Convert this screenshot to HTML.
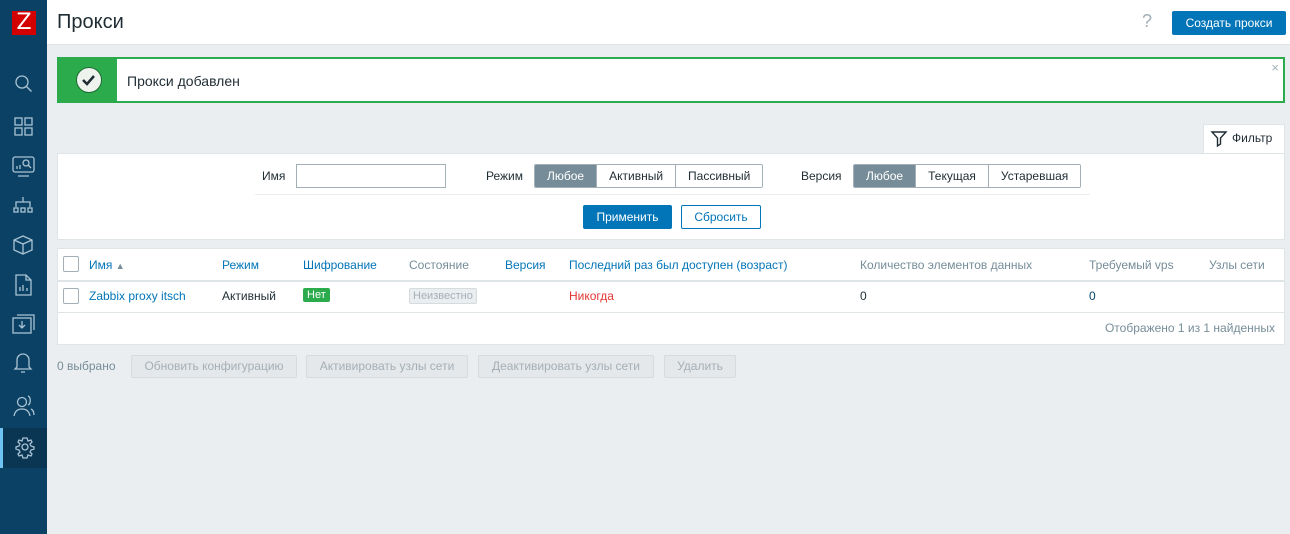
<!DOCTYPE html><html><head><meta charset="utf-8"><style>
*{box-sizing:border-box;margin:0;padding:0}
body{width:1290px;height:534px;background:#ebeef0;font-family:"Liberation Sans",Arial,sans-serif;font-size:12px;color:#1f2c33;position:relative;overflow:hidden}
.a{position:absolute}
#sb{left:0;top:0;width:47px;height:534px;background:#0b4164}
#hd{left:47px;top:0;width:1243px;height:45px;background:#fff;border-bottom:1px solid #dfe4e7}
.btn{position:absolute;height:24px;line-height:22px;text-align:center;border-radius:2px}
.blue{background:#0275b8;color:#fff;border:1px solid #0275b8}
.wb{background:#fff;color:#0275b8;border:1px solid #0275b8}
.seg{position:absolute;height:24px;display:flex;border:1px solid #a2afb7;border-radius:2px;overflow:hidden}
.seg div{padding:0 12px;line-height:22px;border-left:1px solid #a2afb7;background:#fff}
.seg div:first-child{border-left:0;background:#768d99;color:#fff}
.lnk{color:#0275b8}
.dis{position:absolute;height:23px;line-height:21px;border:1px solid #d6dbde;background:#e5e8ea;color:#a5afb6;border-radius:2px;text-align:center}
.cb{position:absolute;width:16px;height:16px;border:1px solid #a2afb7;border-radius:2px;background:#fff}
svg{position:absolute}
</style></head><body>
<div id="sb" class="a">
<div class="a" style="left:12px;top:11px;width:24px;height:24px;background:#d40000;color:#fff;font-size:22px;line-height:24px;text-align:center;font-family:'DejaVu Sans',sans-serif">Z</div>
<div class="a" style="left:0;top:428px;width:47px;height:40px;background:#0a3553;border-left:3px solid #6fc3f2"></div>
<svg width="47" height="440" style="left:0;top:60px" fill="none" stroke="#a9c3d3" stroke-width="1.3">
<circle cx="22" cy="22" r="6"/><path d="M26.5 26.5l5 5"/>
<rect x="15" y="58" width="7" height="7"/><rect x="25" y="58" width="7" height="7"/><rect x="15" y="68" width="7" height="7"/><rect x="25" y="68" width="7" height="7"/>
<rect x="13" y="97" width="21" height="15" rx="2"/><path d="M18 116h11M17 109v-3M20 109v-4"/><circle cx="26" cy="103" r="3"/><path d="M28 105l3 3"/>
<path d="M23 137v5M16 147v-5h14v5"/><rect x="14" y="148" width="4" height="4"/><rect x="21" y="148" width="4" height="4"/><rect x="28" y="148" width="4" height="4"/>
<path d="M23 176l9 4v10l-9 4-9-4v-10zM14 180l9 4 9-4M23 184v10"/>
<path d="M16 215h10l5 5v15H16zM26 215v5h5M20 231v-4M23 231v-6M27 231v-3"/>
<rect x="13" y="258" width="18" height="15"/><path d="M17 255h17v15M22 261v7M19 265l3 3 3-3"/>
<path d="M17 307v-7a6 6 0 0112 0v7l2 2H15zM21 312h4"/>
<circle cx="22" cy="342" r="4.5"/><path d="M14 356c1-5 4-7 8-7s7 2 8 7M28 336c3 1 3 8 0 9M31 349c2 1 3 3 3 6"/>
<circle cx="25" cy="387" r="3"/><path d="M25 378l2 0 1 3 3-1 1 2-2 2 1 2 3 1v2l-3 1-1 2 2 2-1 2-3-1-1 3h-4l-1-3-3 1-1-2 2-2-1-2-3-1v-2l3-1 1-2-2-2 1-2 3 1 1-3z"/>
</svg></div>
<div id="hd" class="a"><div class="a" style="left:10px;top:11px;font-size:20px">Прокси</div>
<div class="a" style="left:1095px;top:11px;font-size:18px;color:#a2afb7">?</div>
<div class="btn blue" style="left:1125px;top:11px;width:114px">Создать прокси</div></div>
<div class="a" style="left:57px;top:57px;width:1228px;height:46px;border:2px solid #2bab4c;background:#fff">
<div class="a" style="left:0;top:0;width:58px;height:42px;background:#2bab4c"></div>
<div class="a" style="left:17px;top:8px;width:26px;height:26px;border-radius:50%;background:#eef3ee;border:1px solid #1d6d33"></div>
<svg width="60" height="42" style="left:0;top:0"><path d="M24 21l4 4 7-8" stroke="#1f2c33" stroke-width="2.5" fill="none"/></svg>
<div class="a" style="left:68px;top:14px;font-size:14px">Прокси добавлен</div>
<div class="a" style="right:4px;top:1px;color:#a2afb7;font-size:13px">×</div></div>
<div class="a" style="left:1203px;top:124px;width:82px;height:30px;background:#fff;border:1px solid #dfe4e7;border-bottom:0">
<svg width="20" height="20" style="left:6px;top:4px"><path d="M2 3h14l-5.5 6v6l-3 2v-8z" fill="none" stroke="#1f2c33" stroke-width="1.4"/></svg>
<div class="a" style="left:28px;top:6px">Фильтр</div></div>
<div class="a" style="left:57px;top:153px;width:1228px;height:87px;background:#fff;border:1px solid #dfe4e7">
<div class="a" style="left:204px;top:15px">Имя</div>
<div class="a" style="left:238px;top:10px;width:150px;height:24px;border:1px solid #a2afb7"></div>
<div class="a" style="left:428px;top:15px">Режим</div>
<div class="seg" style="left:476px;top:10px"><div>Любое</div><div>Активный</div><div>Пассивный</div></div>
<div class="a" style="left:743px;top:15px">Версия</div>
<div class="seg" style="left:795px;top:10px"><div>Любое</div><div>Текущая</div><div>Устаревшая</div></div>
<div class="a" style="left:197px;top:40px;width:835px;height:1px;background:#ebeef0"></div>
<div class="btn blue" style="left:525px;top:51px;width:89px">Применить</div>
<div class="btn wb" style="left:623px;top:51px;width:80px">Сбросить</div></div>
<div class="a" style="left:57px;top:248px;width:1228px;height:97px;background:#fff;border:1px solid #dfe4e7">
<div class="a" style="left:0;top:31px;width:1226px;height:2px;background:#dfe4e7"></div>
<div class="a" style="left:0;top:63px;width:1226px;height:1px;background:#dfe4e7"></div>
<div class="cb" style="left:5px;top:7px"></div><div class="cb" style="left:5px;top:39px"></div>
<div class="a lnk" style="left:31px;top:9px">Имя <span style="color:#768d99;font-size:9px">▲</span></div>
<div class="a lnk" style="left:164px;top:9px">Режим</div>
<div class="a lnk" style="left:245px;top:9px">Шифрование</div>
<div class="a" style="left:351px;top:9px;color:#768d99">Состояние</div>
<div class="a lnk" style="left:447px;top:9px">Версия</div>
<div class="a lnk" style="left:511px;top:9px">Последний раз был доступен (возраст)</div>
<div class="a" style="left:802px;top:9px;color:#768d99">Количество элементов данных</div>
<div class="a" style="left:1031px;top:9px;color:#768d99">Требуемый vps</div>
<div class="a" style="left:1151px;top:9px;color:#768d99">Узлы сети</div>
<div class="a lnk" style="left:31px;top:40px">Zabbix proxy itsch</div>
<div class="a" style="left:164px;top:40px">Активный</div>
<div class="a" style="left:245px;top:39px;background:#2bab4c;color:#fff;font-size:11px;padding:1px 4px;border-radius:2px">Нет</div>
<div class="a" style="left:351px;top:39px;background:#ebeef0;color:#a5afb6;font-size:11px;padding:1px 3px;border:1px solid #d6dbde;border-radius:2px">Неизвестно</div>
<div class="a" style="left:511px;top:40px;color:#e33734">Никогда</div>
<div class="a" style="left:802px;top:40px">0</div>
<div class="a" style="left:1031px;top:40px;color:#0a466a">0</div>
<div class="a" style="right:9px;top:72px;color:#768d99">Отображено 1 из 1 найденных</div></div>
<div class="a" style="left:57px;top:359px;color:#768d99">0 выбрано</div>
<div class="dis" style="left:131px;top:355px;width:166px">Обновить конфигурацию</div>
<div class="dis" style="left:306px;top:355px;width:162px">Активировать узлы сети</div>
<div class="dis" style="left:478px;top:355px;width:176px">Деактивировать узлы сети</div>
<div class="dis" style="left:664px;top:355px;width:72px">Удалить</div>
</body></html>
